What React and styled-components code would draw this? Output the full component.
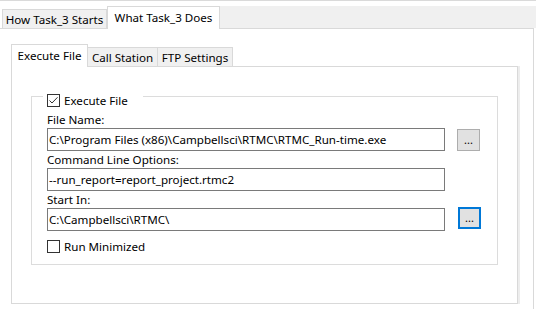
import React from "react";
import styled, { createGlobalStyle } from "styled-components";

const GlobalStyle = createGlobalStyle`
  html, body { margin: 0; padding: 0; background: #ffffff; }
  body { font-family: "Noto Sans", "Open Sans", sans-serif; font-size: 11.6px; color: #000; }
  * { box-sizing: border-box; }
`;

const Window = styled.div`
  width: 536px;
  height: 309px;
  overflow: hidden;
  display: flex;
  flex-direction: column;
  border-top: 1px solid #dadada;
  background: #ffffff;
`;

const TabStrip = styled.div`
  display: flex;
  align-items: flex-end;
  height: ${(p) => p.$height}px;
  padding-left: ${(p) => p.$indent}px;
  flex-shrink: 0;
`;

const Tab = styled.div`
  position: relative;
  z-index: ${(p) => (p.$active ? 1 : 0)};
  width: ${(p) => p.$width}px;
  height: ${(p) => (p.$active ? p.$tall : p.$short)}px;
  margin-bottom: ${(p) => (p.$active ? -1 : 0)}px;
  display: flex;
  align-items: center;
  justify-content: center;
  padding-bottom: ${(p) => (p.$active ? 1 : 0)}px;
  background: ${(p) => (p.$active ? "#ffffff" : "#f0f0f0")};
  border: 1px solid #d9d9d9;
  border-bottom: none;
  border-left: ${(p) => (p.$noLeft ? "none" : "1px solid #d9d9d9")};
  white-space: nowrap;
`;

const StripFill = styled.div`
  flex: 1;
  height: 22px;
  background: #f0f0f0;
`;

const OuterPanel = styled.div`
  flex: 1;
  width: 534px;
  border-top: 1px solid #d9d9d9;
  border-right: 1px solid #d9d9d9;
  padding: 15px 0 0 11px;
  display: flex;
  flex-direction: column;
`;

const InnerPanel = styled.div`
  width: 507px;
  height: 238px;
  border: 1px solid #d9d9d9;
  box-shadow: 2px 0 0 #ededed;
  padding: 29px 19px 0 19px;
`;

const GroupBox = styled.div`
  height: 169px;
  border: 1px solid #dcdcdc;
  padding: 0 0 0 15px;
  display: flex;
  flex-direction: column;
`;

const GroupHeader = styled.div`
  width: 100px;
  height: 13px;
  margin: -3px 0 0 -4px;
  padding-left: 4px;
  background: #ffffff;
  display: flex;
  align-items: center;
`;

const Check = styled.label`
  display: flex;
  align-items: center;
  gap: 4px;
  height: 13px;
  line-height: 13px;
  margin-top: ${(p) => p.$top || 0}px;
  white-space: nowrap;
`;

const Box = styled.span`
  width: 13px;
  height: 13px;
  border: 1px solid #333333;
  background: #ffffff;
  display: flex;
  align-items: center;
  justify-content: center;
  flex-shrink: 0;
`;

const FieldLabel = styled.div`
  height: 17px;
  line-height: 17px;
  margin-top: ${(p) => p.$top || 0}px;
  white-space: nowrap;
`;

const Row = styled.div`
  display: flex;
  align-items: flex-start;
`;

const TextBox = styled.div`
  width: 398px;
  height: 23px;
  border: 1px solid #7a7a7a;
  padding-left: 1px;
  line-height: 21px;
  white-space: nowrap;
  overflow: hidden;
`;

const Browse = styled.button`
  width: 23px;
  height: 22px;
  margin: ${(p) => (p.$focused ? "-1px 0 0 13px" : "1px 0 0 12px")};
  border: ${(p) => (p.$focused ? "2px solid #0078d7" : "1px solid #adadad")};
  background: #e1e1e1;
  font-family: inherit;
  font-size: 11px;
  color: #000;
  padding: 0;
  line-height: 18px;
  display: flex;
  justify-content: center;
  align-items: center;
`;

const CheckBox = ({ checked, children, top }) => (
  <Check $top={top}>
    <Box>
      {checked ? (
        <svg width="11" height="11" viewBox="0 0 11 11">
          <path d="M1.5 5.5 L4 8 L9.5 2.3" fill="none" stroke="#333" strokeWidth="1" />
        </svg>
      ) : null}
    </Box>
    <span>{children}</span>
  </Check>
);

const Field = ({ label, value, top, focused }) => (
  <>
    <FieldLabel $top={top}>{label}</FieldLabel>
    <Row>
      <TextBox>{value}</TextBox>
      {focused !== undefined ? <Browse $focused={focused}>...</Browse> : null}
    </Row>
  </>
);

export default function App() {
  return (
    <>
      <GlobalStyle />
      <Window>
        <TabStrip $height={27} $indent={2}>
          <Tab $width={105} $short={19} $tall={23}>How Task_3 Starts</Tab>
          <Tab $width={113} $short={19} $tall={23} $active>What Task_3 Does</Tab>
          <StripFill />
        </TabStrip>
        <OuterPanel>
          <TabStrip $height={22} $indent={0}>
            <Tab $width={77} $short={19} $tall={23} $active>Execute File</Tab>
            <Tab $width={70} $short={19} $tall={23} $noLeft>Call Station</Tab>
            <Tab $width={75} $short={19} $tall={23} $noLeft>FTP Settings</Tab>
          </TabStrip>
          <InnerPanel>
            <GroupBox>
              <GroupHeader>
                <CheckBox checked>Execute File</CheckBox>
              </GroupHeader>
              <Field
                top={4}
                label="File Name:"
                value="C:\Program Files (x86)\Campbellsci\RTMC\RTMC_Run-time.exe"
                focused={false}
              />
              <Field label="Command Line Options:" value="--run_report=report_project.rtmc2" />
              <Field label="Start In:" value="C:\Campbellsci\RTMC\" focused={true} />
              <CheckBox top={9}>Run Minimized</CheckBox>
            </GroupBox>
          </InnerPanel>
        </OuterPanel>
      </Window>
    </>
  );
}
